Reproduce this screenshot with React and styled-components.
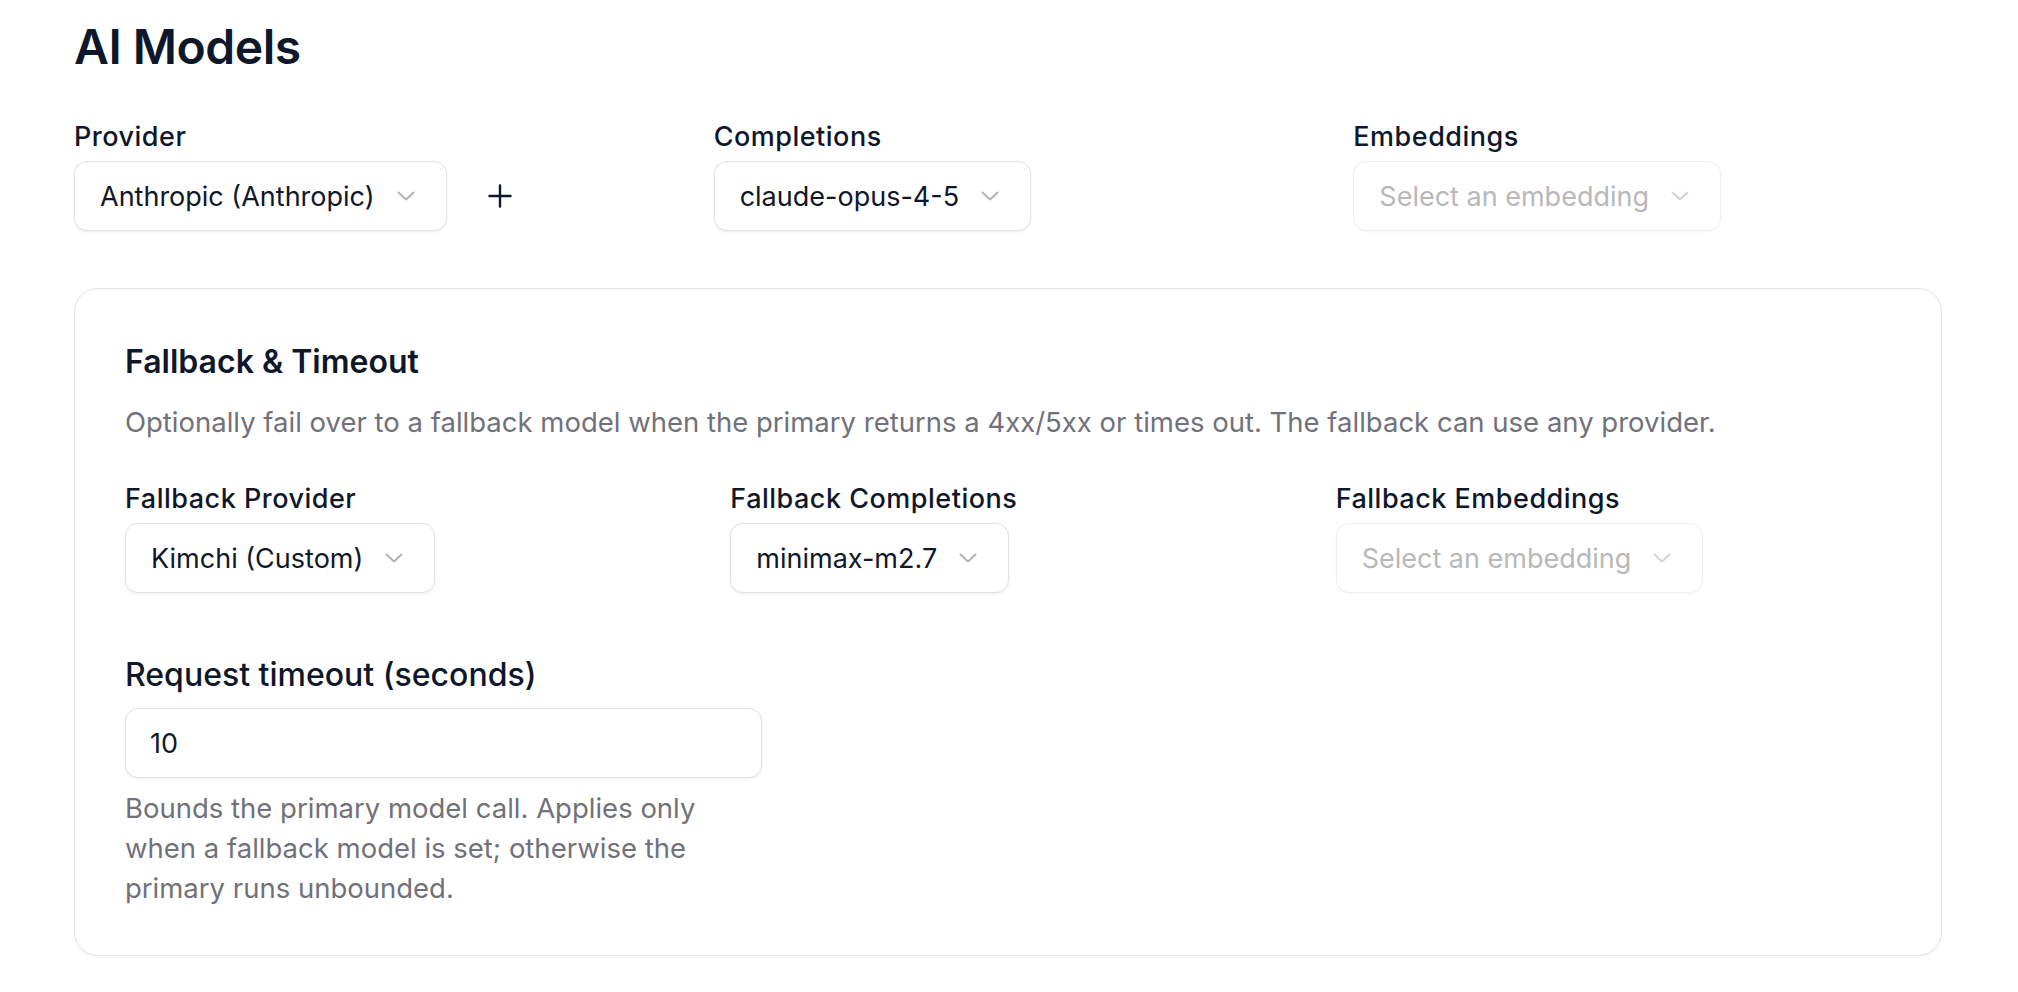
import React from 'react';
import styled, { createGlobalStyle } from 'styled-components';

const GlobalStyle = createGlobalStyle`
  html, body {
    margin: 0;
    padding: 0;
    background: #ffffff;
  }
  body {
    font-family: Inter, "Noto Sans", "Liberation Sans", sans-serif;
    color: #0f172a;
    -webkit-font-smoothing: antialiased;
  }
  * {
    box-sizing: border-box;
  }
`;

const Page = styled.div`
  padding: 18px 76px 40px 74px;
`;

const Title = styled.h1`
  margin: 0;
  font-size: 48px;
  line-height: 58px;
  font-weight: 600;
  letter-spacing: -0.5px;
  color: #0f172a;
`;

const FieldGrid = styled.div`
  display: grid;
  grid-template-columns: repeat(3, 1fr);
  column-gap: ${(p) => p.gap}px;
  margin-top: ${(p) => p.top}px;
`;

const Field = styled.div`
  display: flex;
  flex-direction: column;
  align-items: flex-start;
  gap: 5px;
`;

const Label = styled.label`
  font-size: 27px;
  line-height: 38px;
  font-weight: 500;
  letter-spacing: 0.5px;
  color: #0f172a;
`;

const SelectRow = styled.div`
  display: flex;
  align-items: center;
  gap: 18px;
`;

const SelectBox = styled.button`
  display: inline-flex;
  align-items: center;
  gap: 22px;
  height: 70px;
  padding: 0 31px 0 25px;
  border: 1px solid ${(p) => (p.disabled ? '#f0f0f0' : '#e2e2e2')};
  border-radius: 13px;
  background: #ffffff;
  box-shadow: 0 1px 3px rgba(0, 0, 0, ${(p) => (p.disabled ? 0.03 : 0.07)});
  font-family: inherit;
  font-size: 27px;
  color: ${(p) => (p.disabled ? '#b8b8b8' : '#0f172a')};
  cursor: ${(p) => (p.disabled ? 'not-allowed' : 'pointer')};
  white-space: nowrap;
`;

const PlusButton = styled.button`
  display: flex;
  align-items: center;
  justify-content: center;
  width: 70px;
  height: 70px;
  border: none;
  background: transparent;
  color: #0f172a;
  padding: 0;
  cursor: pointer;
`;

const Card = styled.section`
  margin-top: 57px;
  padding: 50px 50px 47px;
  border: 1px solid #e4e4e7;
  border-radius: 24px;
  background: #ffffff;
  box-shadow: 0 1px 3px rgba(0, 0, 0, 0.05);
`;

const CardTitle = styled.h2`
  margin: 0;
  font-size: 32px;
  line-height: 46px;
  font-weight: 600;
  color: #0f172a;
`;

const Description = styled.p`
  margin: 17px 0 0;
  font-size: 27.5px;
  line-height: 40px;
  color: #71717a;
`;

const TimeoutBlock = styled.div`
  width: 637px;
  margin-top: 59px;
`;

const TimeoutLabel = styled.label`
  display: block;
  font-size: 32px;
  line-height: 45px;
  font-weight: 500;
  color: #0f172a;
`;

const TextInput = styled.input`
  display: block;
  width: 100%;
  height: 70px;
  margin-top: 11px;
  padding: 0 24px;
  border: 1px solid #e2e2e2;
  border-radius: 13px;
  box-shadow: 0 1px 3px rgba(0, 0, 0, 0.07);
  font-family: inherit;
  font-size: 27px;
  color: #0f172a;
  outline: none;
`;

const Helper = styled.p`
  margin: 10px 0 0;
  font-size: 27.5px;
  line-height: 40px;
  color: #71717a;
`;

function Chevron({ faded }) {
  return (
    <svg width="18" height="10" viewBox="0 0 18 10" fill="none">
      <polyline
        points="1.5,1.5 9,8.5 16.5,1.5"
        stroke={faded ? '#d4d4d4' : '#b3b3b3'}
        strokeWidth="2"
        strokeLinecap="round"
        strokeLinejoin="round"
      />
    </svg>
  );
}

function Select({ value, placeholder }) {
  return (
    <SelectBox type="button" disabled={!value}>
      <span>{value || placeholder}</span>
      <Chevron faded={!value} />
    </SelectBox>
  );
}

function PlusIcon() {
  return (
    <svg width="24" height="24" viewBox="0 0 24 24" fill="none">
      <path d="M12 1.5v21M1.5 12h21" stroke="#0f172a" strokeWidth="2.4" strokeLinecap="round" />
    </svg>
  );
}

export default function App() {
  return (
    <>
      <GlobalStyle />
      <Page>
        <Title>AI Models</Title>

        <FieldGrid gap={51} top={42}>
          <Field>
            <Label>Provider</Label>
            <SelectRow>
              <Select value="Anthropic (Anthropic)" />
              <PlusButton type="button" aria-label="Add provider">
                <PlusIcon />
              </PlusButton>
            </SelectRow>
          </Field>
          <Field>
            <Label>Completions</Label>
            <Select value="claude-opus-4-5" />
          </Field>
          <Field>
            <Label>Embeddings</Label>
            <Select placeholder="Select an embedding" />
          </Field>
        </FieldGrid>

        <Card>
          <CardTitle>Fallback &amp; Timeout</CardTitle>
          <Description>
            Optionally fail over to a fallback model when the primary returns a 4xx/5xx or times out. The fallback can use any provider.
          </Description>

          <FieldGrid gap={50} top={38}>
            <Field>
              <Label>Fallback Provider</Label>
              <Select value="Kimchi (Custom)" />
            </Field>
            <Field>
              <Label>Fallback Completions</Label>
              <Select value="minimax-m2.7" />
            </Field>
            <Field>
              <Label>Fallback Embeddings</Label>
              <Select placeholder="Select an embedding" />
            </Field>
          </FieldGrid>

          <TimeoutBlock>
            <TimeoutLabel>Request timeout (seconds)</TimeoutLabel>
            <TextInput type="text" defaultValue="10" />
            <Helper>
              Bounds the primary model call. Applies only when a fallback model is set; otherwise the primary runs unbounded.
            </Helper>
          </TimeoutBlock>
        </Card>
      </Page>
    </>
  );
}
